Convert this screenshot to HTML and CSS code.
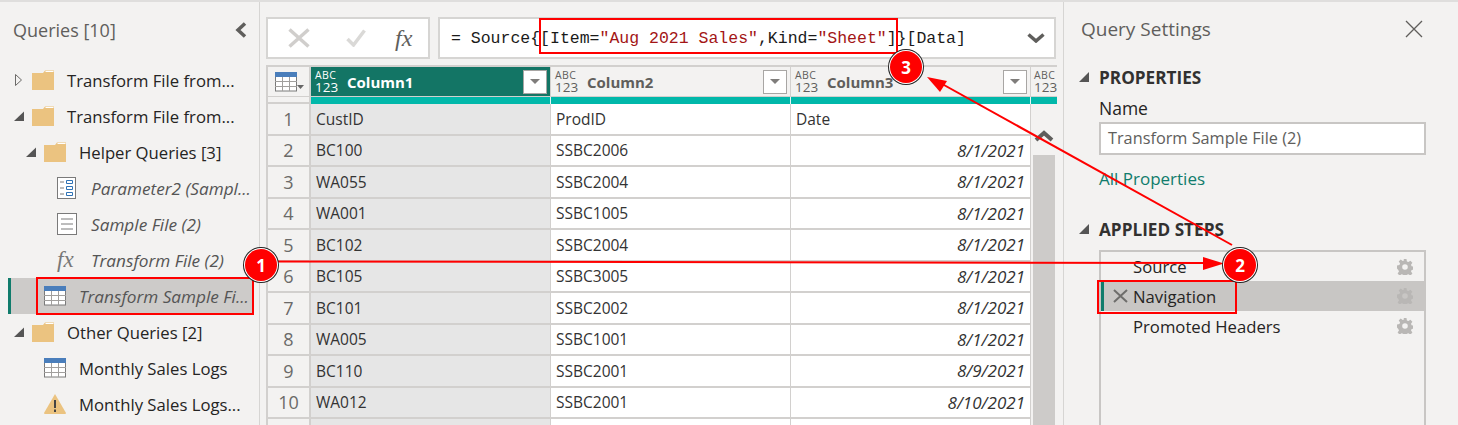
FILE: index.html
```html
<!DOCTYPE html>
<html lang="en">
<head>
    <meta charset="UTF-8">
    <title>Power Query Editor</title>
    <link rel="stylesheet" href="styles.css">
</head>
<body>
    <svg class="icon-defs" width="0" height="0">
        <symbol id="folder" viewBox="0 0 22 20">
            <path d="M0 3h11l2-2.500h9V20H0z" fill="#ebc380"/>
            <path d="M13.500 1.500h8" stroke="#fff" stroke-width="1"/>
        </symbol>
        <symbol id="table" viewBox="0 0 22 20">
            <rect x=".5" y="1" width="21" height="18" fill="#fff" stroke="#7a7a7a"/>
            <rect y="0" width="22" height="5" fill="#4a7ebb"/>
            <path d="M0 9.500h22M0 14.500h22M7.500 5v14M14.500 5v14" stroke="#a19f9d" fill="none"/>
        </symbol>
        <symbol id="gear" viewBox="0 0 16 16">
            <path fill-rule="evenodd" d="M6.500 0h3l.4 2.400 1.500.7 2-1.400 2 2.100-1.400 2 .6 1.500 2.400.4v3l-2.400.4-.6 1.500 1.400 2-2 2-2-1.400-1.500.6-.4 2.400h-3l-.4-2.400-1.500-.6-2 1.400-2-2 1.400-2-.7-1.500L0 9.500v-3l2.400-.4.7-1.500-1.400-2 2-2.100 2 1.400 1.500-.7zM8 5.200a2.800 2.800 0 1 0 0 5.600 2.800 2.800 0 0 0 0-5.600z" fill="#b9b7b5"/>
        </symbol>
        <symbol id="filter" viewBox="0 0 24 24">
            <rect x=".5" y=".5" width="23" height="23" fill="#fff" stroke="#a8a6a4"/>
            <path d="M7 9h10l-5 5z" fill="#7f7d7b"/>
        </symbol>
    </svg>

    <div class="app">
        <aside class="queries">
            <div class="pane-head">
                <span class="pane-title">Queries [10]</span>
                <svg class="collapse" width="12" height="16" viewBox="0 0 12 16"><path d="M10 1.500 3 8l7 6.500" fill="none" stroke="#5f5e5c" stroke-width="3.500"/></svg>
            </div>
            <div class="tree">
                <div class="tree-row lvl-0">
                    <svg class="arrow" width="18" height="12" viewBox="0 0 18 12"><path d="M1.500.5 7.500 6l-6 5.500z" fill="none" stroke="#6b6a68"/></svg>
                    <svg class="tree-icon"><use href="#folder"/></svg>
                    <span>Transform File from...</span>
                </div>
                <div class="tree-row lvl-0">
                    <svg class="arrow" width="18" height="12" viewBox="0 0 18 12"><path d="M10 1.500V11H0z" fill="#555"/></svg>
                    <svg class="tree-icon"><use href="#folder"/></svg>
                    <span>Transform File from...</span>
                </div>
                <div class="tree-row lvl-1">
                    <svg class="arrow" width="18" height="12" viewBox="0 0 18 12"><path d="M10 1.500V11H0z" fill="#555"/></svg>
                    <svg class="tree-icon"><use href="#folder"/></svg>
                    <span>Helper Queries [3]</span>
                </div>
                <div class="tree-row lvl-2 query-fn">
                    <svg class="tree-icon small" viewBox="0 0 20 22">
                        <rect x=".5" y=".5" width="18" height="21" fill="#fff" stroke="#7a7a7a"/>
                        <path d="M3 5h4M3 11h4M3 17h4" stroke="#7a7a7a"/>
                        <path d="M9.500 3.500h6v3h-6zM9.500 9.500h6v3h-6zM9.500 15.500h6v3h-6z" fill="none" stroke="#2f72b5"/>
                    </svg>
                    <span>Parameter2 (Sampl...</span>
                </div>
                <div class="tree-row lvl-2 query-fn">
                    <svg class="tree-icon small" viewBox="0 0 20 22">
                        <rect x=".5" y=".5" width="19" height="21" fill="#fff" stroke="#7a7a7a"/>
                        <path d="M4 6h12M4 11h12M4 16h12" stroke="#7a7a7a"/>
                    </svg>
                    <span>Sample File (2)</span>
                </div>
                <div class="tree-row lvl-2 query-fn">
                    <span class="fx-icon">fx</span>
                    <span>Transform File (2)</span>
                </div>
                <div class="tree-row lvl-1-item query-fn selected">
                    <svg class="tree-icon"><use href="#table"/></svg>
                    <span>Transform Sample Fi...</span>
                </div>
                <div class="tree-row lvl-0">
                    <svg class="arrow" width="18" height="12" viewBox="0 0 18 12"><path d="M10 1.500V11H0z" fill="#555"/></svg>
                    <svg class="tree-icon"><use href="#folder"/></svg>
                    <span>Other Queries [2]</span>
                </div>
                <div class="tree-row lvl-1-item">
                    <svg class="tree-icon"><use href="#table"/></svg>
                    <span>Monthly Sales Logs</span>
                </div>
                <div class="tree-row lvl-1-item">
                    <svg class="tree-icon" viewBox="0 0 22 20">
                        <path d="M11 0 22 19a1 1 0 0 1-1 1H1a1 1 0 0 1-1-1z" fill="#ebc380"/>
                        <path d="M10 6h2v8h-2zM10 15.500h2v2.500h-2z" fill="#444"/>
                    </svg>
                    <span>Monthly Sales Logs...</span>
                </div>
            </div>
        </aside>

        <main class="editor">
            <div class="formula-row">
                <div class="formula-btns">
                    <svg width="22" height="20" viewBox="0 0 22 20"><path d="M1.500 1.500l19 17M20.500 1.500l-19 17" stroke="#d0cecc" stroke-width="3.500" fill="none"/></svg>
                    <svg width="20" height="18" viewBox="0 0 20 18"><path d="M1.500 10l6 6L18.500 1.500" stroke="#dad9d7" stroke-width="3.500" fill="none"/></svg>
                    <span class="fx-btn">fx</span>
                </div>
                <div class="formula-box">
                    <code class="formula">= Source{[Item=<span class="str">"Aug 2021 Sales"</span>,Kind=<span class="str">"Sheet"</span>]}[Data]</code>
                    <svg class="formula-open" width="18" height="10" viewBox="0 0 18 10"><path d="M1.500 1.500 9 8l7.500-6.500" fill="none" stroke="#5f5e5c" stroke-width="3.500"/></svg>
                </div>
            </div>

            <div class="grid">
                <div class="corner">
                    <svg width="22" height="20"><use href="#table"/></svg>
                    <svg class="corner-caret" width="7" height="4" viewBox="0 0 7 4"><path d="M0 0h7L3.500 4z" fill="#666"/></svg>
                </div>
                <div class="col-head active">
                    <span class="type-tag"><b>ABC</b><b>123</b></span>
                    <span class="col-name">Column1</span>
                    <svg class="filter-btn"><use href="#filter"/></svg>
                </div>
                <div class="col-head">
                    <span class="type-tag"><b>ABC</b><b>123</b></span>
                    <span class="col-name">Column2</span>
                    <svg class="filter-btn"><use href="#filter"/></svg>
                </div>
                <div class="col-head">
                    <span class="type-tag"><b>ABC</b><b>123</b></span>
                    <span class="col-name">Column3</span>
                    <svg class="filter-btn"><use href="#filter"/></svg>
                </div>
                <div class="col-head last">
                    <span class="type-tag"><b>ABC</b><b>123</b></span>
                </div>

                <div class="strip-corner"></div>
                <div class="strip"></div>
                <div class="strip"></div>
                <div class="strip"></div>
                <div class="strip last"></div>

                <div class="num">1</div><div class="cell sel">CustID</div><div class="cell">ProdID</div><div class="cell">Date</div>
                <div class="scroll-col">
                    <svg width="22" height="14" viewBox="0 0 22 14"><path d="M3 11l8-7 8 7" fill="none" stroke="#5f5e5c" stroke-width="4"/></svg>
                    <div class="scroll-thumb"></div>
                </div>
                <div class="num">2</div><div class="cell sel">BC100</div><div class="cell">SSBC2006</div><div class="cell date">8/1/2021</div>
                <div class="num">3</div><div class="cell sel">WA055</div><div class="cell">SSBC2004</div><div class="cell date">8/1/2021</div>
                <div class="num">4</div><div class="cell sel">WA001</div><div class="cell">SSBC1005</div><div class="cell date">8/1/2021</div>
                <div class="num">5</div><div class="cell sel">BC102</div><div class="cell">SSBC2004</div><div class="cell date">8/1/2021</div>
                <div class="num">6</div><div class="cell sel">BC105</div><div class="cell">SSBC3005</div><div class="cell date">8/1/2021</div>
                <div class="num">7</div><div class="cell sel">BC101</div><div class="cell">SSBC2002</div><div class="cell date">8/1/2021</div>
                <div class="num">8</div><div class="cell sel">WA005</div><div class="cell">SSBC1001</div><div class="cell date">8/1/2021</div>
                <div class="num">9</div><div class="cell sel">BC110</div><div class="cell">SSBC2001</div><div class="cell date">8/9/2021</div>
                <div class="num">10</div><div class="cell sel">WA012</div><div class="cell">SSBC2001</div><div class="cell date">8/10/2021</div>
                <div class="num"></div><div class="cell sel"></div><div class="cell"></div><div class="cell"></div>
            </div>
        </main>

        <aside class="settings">
            <div class="settings-head">
                <span class="pane-title settings-title">Query Settings</span>
                <svg width="18" height="18" viewBox="0 0 18 18"><path d="M1 1l16 16M17 1 1 17" stroke="#605e5c" stroke-width="1.300" fill="none"/></svg>
            </div>
            <h3 class="section"><svg width="10" height="10" viewBox="0 0 10 10"><path d="M10 0v10H0z" fill="#555"/></svg>PROPERTIES</h3>
            <label class="name-label">Name</label>
            <div class="name-input">Transform Sample File (2)</div>
            <a class="all-props">All Properties</a>
            <h3 class="section steps-title"><svg width="10" height="10" viewBox="0 0 10 10"><path d="M10 0v10H0z" fill="#555"/></svg>APPLIED STEPS</h3>
            <ul class="steps">
                <li class="step"><span>Source</span><svg width="16" height="16"><use href="#gear"/></svg></li>
                <li class="step current">
                    <svg class="step-del" width="15" height="14" viewBox="0 0 15 14"><path d="M1 1l13 12M14 1 1 13" stroke="#6e6d6b" stroke-width="2" fill="none"/></svg>
                    <span>Navigation</span><svg width="16" height="16"><use href="#gear"/></svg>
                </li>
                <li class="step"><span>Promoted Headers</span><svg width="16" height="16"><use href="#gear"/></svg></li>
            </ul>
        </aside>

        <!-- annotations drawn over the window -->
        <svg class="arrows" width="1458" height="425" viewBox="0 0 1458 425">
            <path d="M278 261.500 1210 263" stroke="#f00" stroke-width="2" fill="none"/>
            <path d="M1224 263.500 1203 257v13z" fill="#f00"/>
            <path d="M1232 245 935 80" stroke="#f00" stroke-width="2" fill="none"/>
            <path d="M927 77 947 81 940 92z" fill="#f00"/>
        </svg>
        <div class="red-box box-query"></div>
        <div class="red-box box-formula"></div>
        <div class="red-box box-step"></div>
        <div class="badge badge-1">1</div>
        <div class="badge badge-2">2</div>
        <div class="badge badge-3">3</div>
    </div>
</body>
</html>
```

FILE: styles.css
```css
* {
    box-sizing: border-box;
}
html, body {
    margin: 0;
    height: 425px;
    overflow: hidden;
}
body {
    font-family: "Open Sans", Arial, sans-serif;
    font-size: 16px;
    color: #252423;
    background-color: #f3f2f1;
}
.icon-defs {
    position: absolute;
}
.app {
    position: relative;
    display: flex;
    width: 1458px;
    height: 425px;
    overflow: hidden;
    border-top: 2px solid #dfdedd;
}

/* left pane */
.queries {
    width: 260px;
    flex: none;
    border-right: 1px solid #d6d5d3;
}
.pane-head {
    display: flex;
    align-items: center;
    justify-content: space-between;
    height: 60px;
    padding: 0 12px 5px 13px;
}
.pane-title {
    font-size: 18px;
    color: #605e5c;
}
.settings-title {
    font-size: 19px;
}
.tree-row {
    display: flex;
    align-items: center;
    height: 36px;
    white-space: nowrap;
    font-size: 16.700px;
}
.lvl-0 {
    padding-left: 14px;
}
.lvl-1 {
    padding-left: 26px;
}
.lvl-1-item {
    padding-left: 44px;
}
.lvl-2 {
    padding-left: 57px;
}
.arrow {
    flex: none;
}
.tree-icon {
    flex: none;
    width: 22px;
    height: 20px;
    margin-right: 13px;
}
.tree-icon.small {
    width: 20px;
    height: 22px;
    margin-right: 14px;
}
.fx-icon {
    width: 20px;
    margin-right: 14px;
    font-family: "Liberation Serif", serif;
    font-style: italic;
    font-size: 23px;
    color: #777;
}
.query-fn span:last-child {
    font-style: italic;
    font-size: 17.200px;
    color: #555;
}
.selected {
    margin: 0 6px 0 8px;
    padding-left: 33px;
    border-left: 3px solid #107c6c;
    background-color: #cdcbc9;
}

/* formula bar */
.editor {
    width: 803px;
    flex: none;
    height: 423px;
    overflow: hidden;
    padding: 15px 0 0 6px;
}
.formula-row {
    display: flex;
    gap: 8px;
    width: 790px;
    height: 42px;
    margin-bottom: 6px;
}
.formula-btns {
    display: flex;
    align-items: center;
    gap: 36px;
    width: 164px;
    padding-left: 20px;
    border: 2px solid #d6d5d3;
    background-color: #fff;
}
.fx-btn {
    margin-left: -7px;
    font-family: "Liberation Serif", serif;
    font-style: italic;
    font-size: 24px;
    color: #605e5c;
}
.formula-box {
    display: flex;
    align-items: center;
    justify-content: space-between;
    flex: 1;
    padding: 0 9px 0 11px;
    border: 2px solid #d6d5d3;
    background-color: #fff;
}
.formula {
    font-family: "Liberation Mono", monospace;
    font-size: 16.500px;
    color: #1a1a1a;
    white-space: pre;
}
.str {
    color: #a31515;
}

/* data grid */
.grid {
    display: grid;
    grid-template-columns: 43px 240px 240px 240px 26px;
    grid-template-rows: 30px 7px repeat(11, 31.500px);
    width: 791px;
    border-left: 2px solid #d2d0ce;
    border-top: 2px solid #d2d0ce;
}
.corner {
    display: flex;
    align-items: center;
    padding: 0 0 0 7px;
    border-right: 2px solid #d2d0ce;
    border-bottom: 1px solid #d2d0ce;
}
.corner-caret {
    margin-top: 11px;
}
.col-head {
    display: flex;
    align-items: center;
    padding: 0 3px 0 4px;
    border-right: 1px solid #d2d0ce;
    border-bottom: 1px solid #d2d0ce;
    color: #605e5c;
}
.col-head.active {
    background-color: #137565;
    color: #fff;
}
.col-head.last {
    padding: 0 0 0 3px;
    border-right: 0;
}
.type-tag {
    display: flex;
    flex-direction: column;
    width: 32px;
    flex: none;
    line-height: 1;
}
.col-head.last .type-tag {
    width: 23px;
}
.type-tag b {
    font-weight: 400;
    font-size: 13.500px;
    height: 13px;
    line-height: 13px;
}
.type-tag b:first-child {
    font-size: 10.500px;
    height: 11px;
    line-height: 11px;
    letter-spacing: .4px;
}
.col-name {
    flex: 1;
    font-weight: 700;
    font-size: 15px;
}
.filter-btn {
    flex: none;
    width: 24px;
    height: 24px;
}
.strip-corner {
    border-right: 2px solid #d2d0ce;
    border-bottom: 2px solid #d2d0ce;
}
.strip {
    background-color: #01b8aa;
    border-right: 1px solid #e6f7f5;
}
.strip.last {
    border-right: 0;
}
.num {
    display: flex;
    align-items: center;
    justify-content: center;
    font-size: 18px;
    color: #6b6a68;
    border-right: 2px solid #d2d0ce;
    border-bottom: 2px solid #d2d0ce;
}
.cell {
    display: flex;
    align-items: center;
    padding: 0 5px;
    font-size: 15.500px;
    color: #333;
    background-color: #fff;
    border-right: 1px solid #d2d0ce;
    border-bottom: 2px solid #d2d0ce;
}
.cell.sel {
    background-color: #e6e6e6;
}
.cell.date {
    justify-content: flex-end;
    font-style: italic;
    font-size: 17px;
}
.scroll-col {
    grid-column: 5;
    grid-row: 3 / span 11;
    display: flex;
    flex-direction: column;
    padding: 25px 0 0 2px;
}
.scroll-thumb {
    flex: 1;
    width: 22px;
    margin-top: 12px;
    background-color: #cdcbc9;
}

/* right pane */
.settings {
    flex: 1;
    height: 423px;
    overflow: hidden;
    padding-left: 17px;
    border-left: 1px solid #d6d5d3;
}
.settings-head {
    display: flex;
    align-items: center;
    justify-content: space-between;
    width: 342px;
    height: 54px;
}
.section {
    display: flex;
    align-items: center;
    gap: 10px;
    height: 22px;
    margin: 10px 0 0 -2px;
    font-size: 17.200px;
    font-weight: 700;
    color: #323130;
}
.name-label {
    display: block;
    margin: 8px 0 0 18px;
    font-size: 17.500px;
    line-height: 24px;
}
.name-input {
    width: 327px;
    height: 33px;
    margin: 2px 0 0 18px;
    padding: 0 0 0 7px;
    line-height: 29px;
    font-size: 16.300px;
    color: #605e5c;
    background-color: #fff;
    border: 2px solid #c8c6c4;
}
.all-props {
    display: block;
    margin: 12px 0 0 18px;
    line-height: 24px;
    font-size: 17px;
    color: #107c6c;
}
.steps-title {
    margin-top: 27px;
}
.steps {
    width: 327px;
    height: 200px;
    margin: 10px 0 0 18px;
    padding: 0;
    list-style: none;
    border: 2px solid #c8c6c4;
}
.step {
    display: flex;
    align-items: center;
    height: 30px;
    padding: 0 11px 0 32px;
    font-size: 16.700px;
}
.step:first-child {
    height: 29px;
}
.step span {
    flex: 1;
}
.step.current {
    padding-left: 9px;
    border-left: 3px solid #107c6c;
    background-color: #c8c6c4;
}
.step-del {
    margin-right: 5px;
}

/* annotations */
.arrows {
    position: absolute;
    top: -2px;
    left: 0;
    pointer-events: none;
}
.red-box {
    position: absolute;
    border: 2px solid #f00;
}
.box-query {
    left: 36px;
    top: 275px;
    width: 218px;
    height: 38px;
}
.box-formula {
    left: 539px;
    top: 16px;
    width: 359px;
    height: 36px;
}
.box-step {
    left: 1097px;
    top: 278px;
    width: 140px;
    height: 34px;
}
.badge {
    position: absolute;
    display: flex;
    align-items: center;
    justify-content: center;
    width: 32px;
    height: 32px;
    border-radius: 50%;
    font-weight: 700;
    font-size: 17px;
    color: #fff;
    background-color: #f00;
    box-shadow: 0 0 0 1px #fff, 0 0 0 2px #222;
}
.badge-1 {
    left: 245px;
    top: 247px;
}
.badge-2 {
    left: 1224px;
    top: 247px;
}
.badge-3 {
    left: 890px;
    top: 49px;
}
```
